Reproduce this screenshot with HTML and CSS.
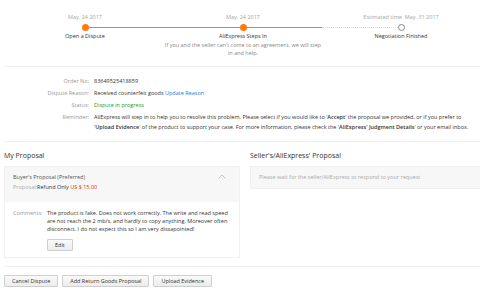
FILE: index.html
```html
<!DOCTYPE html>
<html lang="en">
<head>
<meta charset="utf-8">
<title>Dispute</title>
<link rel="stylesheet" href="styles.css">
</head>
<body>
<div class="page">
  <div class="steps">
    <div class="step done">
      <div class="date">May. 24 2017</div>
      <div class="track"><span class="half left none"></span><span class="dot"></span><span class="half right orange"></span></div>
      <div class="label">Open a Dispute</div>
    </div>
    <div class="step done">
      <div class="date">May. 24 2017</div>
      <div class="track"><span class="half left orange"></span><span class="dot"></span><span class="half right orange"></span></div>
      <div class="label">AliExpress Steps In</div>
      <div class="sub">If you and the seller can't come to an agreement, we will step<br>in and help.</div>
    </div>
    <div class="step todo">
      <div class="date">Estimated time &nbsp;May. 31 2017</div>
      <div class="track"><span class="half left dotted"></span><span class="dot"></span><span class="half right none"></span></div>
      <div class="label">Negotiation Finished</div>
    </div>
  </div>

  <div class="info">
    <div class="row"><div class="k">Order No:</div><div class="v">83649525418859</div></div>
    <div class="row"><div class="k">Dispute Reason:</div><div class="v">Received counterfeit goods <a class="link">Update Reason</a></div></div>
    <div class="row"><div class="k">Status:</div><div class="v status">Dispute in progress</div></div>
    <div class="row"><div class="k">Reminder:</div><div class="v">AliExpress will step in to help you to resolve this problem. Please select if you would like to '<b>Accept</b>' the proposal we provided, or if you prefer to '<b>Upload Evidence</b>' of the product to support your case. For more information, please check the '<b>AliExpress' Judgment Details</b>' or your email inbox.</div></div>
  </div>

  <div class="proposals">
    <div class="col">
      <h2 class="title">My Proposal</h2>
      <div class="card">
        <div class="card-head">
          <div class="ph-title">Buyer's Proposal (Preferred)</div>
          <div class="ph-line"><span class="muted">Proposal:</span>Refund Only <span class="price">US $ 15.00</span></div>
          <svg class="chev" width="8" height="5" viewBox="0 0 8 5"><path d="M0.5 4.5 L4 1 L7.5 4.5" fill="none" stroke="#b5b5b5" stroke-width="0.8"/></svg>
        </div>
        <div class="card-body">
          <div class="ck">Comments:</div>
          <div class="cv">
            <p>The product is fake. Does not work correctly. The write and read speed are not reach the 2 mb/s, and hardly to copy anything. Moreover often disconnect. I do not expect this so I am very dissapointed!</p>
            <button class="btn small">Edit</button>
          </div>
        </div>
      </div>
    </div>
    <div class="col">
      <h2 class="title">Seller's/AliExpress' Proposal</h2>
      <div class="card wait">Please wait for the seller/AliExpress to respond to your request</div>
    </div>
  </div>

  <div class="actions">
    <button class="btn">Cancel Dispute</button>
    <button class="btn">Add Return Goods Proposal</button>
    <button class="btn">Upload Evidence</button>
  </div>
</div>
</body>
</html>
```
FILE: styles.css
```css
html, body {
  margin: 0;
  padding: 0;
  background: #ffffff;
}
body {
  width: 480px;
  height: 293px;
  overflow: hidden;
  font-family: "Open Sans", "Liberation Sans", sans-serif;
  font-size: 5.5px;
  color: #333;
}
.page {
  padding-left: 4px;
}
.steps {
  display: grid;
  grid-template-columns: 158px 158px 158px;
  padding: 12px 0 0 2px;
  height: 54px;
  border-bottom: 1px solid #f2f2f2;
}
.step {
  display: flex;
  flex-direction: column;
  align-items: center;
  text-align: center;
}
.date {
  color: #a5a5a5;
  line-height: 10px;
}
.track {
  display: flex;
  align-items: center;
  width: 100%;
  height: 8px;
  margin-top: 1px;
}
.half {
  flex: 1;
  height: 0;
}
.half.orange { border-top: 1px solid #ff7a0c; }
.half.dotted { border-top: 1px dotted #d8d8d8; }
.dot {
  width: 7px;
  height: 7px;
  border-radius: 50%;
  flex: none;
  box-sizing: border-box;
}
.done .dot { background: #ff7a0c; }
.todo .dot { border: 1px solid #8a8a8a; background: #fff; }
.label {
  color: #333;
  line-height: 10px;
}
.sub {
  color: #888;
  white-space: nowrap;
  line-height: 8px;
}
.info {
  padding: 9px 8px 9px 0;
  border-bottom: 1px solid #f2f2f2;
}
.row {
  display: flex;
  line-height: 10px;
  margin-bottom: 2px;
}
.row:last-child { margin-bottom: 0; }
.k {
  width: 85px;
  flex: none;
  text-align: right;
  color: #999;
  padding-right: 5px;
}
.v { color: #333; }
.v b { font-weight: 600; color: #333; }
.link { color: #2d72d9; }
.status { color: #22a022; }
.proposals {
  display: grid;
  grid-template-columns: 236px 236px;
  column-gap: 10px;
  padding-top: 9px;
  padding-bottom: 8px;
  border-bottom: 1px solid #f2f2f2;
}
.title {
  margin: 0;
  font-weight: 400;
  font-size: 7px;
  line-height: 10px;
  color: #333;
  margin-bottom: 5px;
}
.card {
  border: 1px solid #f0f0f0;
  background: #fff;
}
.card-head {
  position: relative;
  background: #f7f7f7;
  padding: 5px 8px 6px 8px;
  height: 24px;
}
.ph-title {
  line-height: 10px;
  color: #555;
}
.ph-line {
  line-height: 10px;
  color: #333;
}
.muted { color: #aaa; }
.price { color: #e62e04; }
.chev {
  position: absolute;
  right: 13px;
  top: 7px;
}
.card-body {
  display: flex;
  padding: 7px 8px 6px 8px;
}
.ck {
  width: 34px;
  flex: none;
  color: #999;
  line-height: 8px;
}
.cv p {
  margin: 0;
  line-height: 8px;
  color: #333;
}
.btn {
  font-family: "Open Sans", "Liberation Sans", sans-serif;
  font-size: 5.5px;
  color: #333;
  background: linear-gradient(#fafafa, #ececec);
  border: 1px solid #cfcfcf;
  border-radius: 1px;
  height: 12px;
  line-height: 10px;
  padding: 0 7px;
  margin: 0;
}
.btn.small {
  margin-top: 6px;
  padding: 0 7px;
}
.wait {
  background: #f7f7f7;
  color: #aaa;
  line-height: 10px;
  padding: 5px 8px 6px 8px;
}
.actions {
  display: flex;
  gap: 4px;
  padding-top: 8px;
}
```
